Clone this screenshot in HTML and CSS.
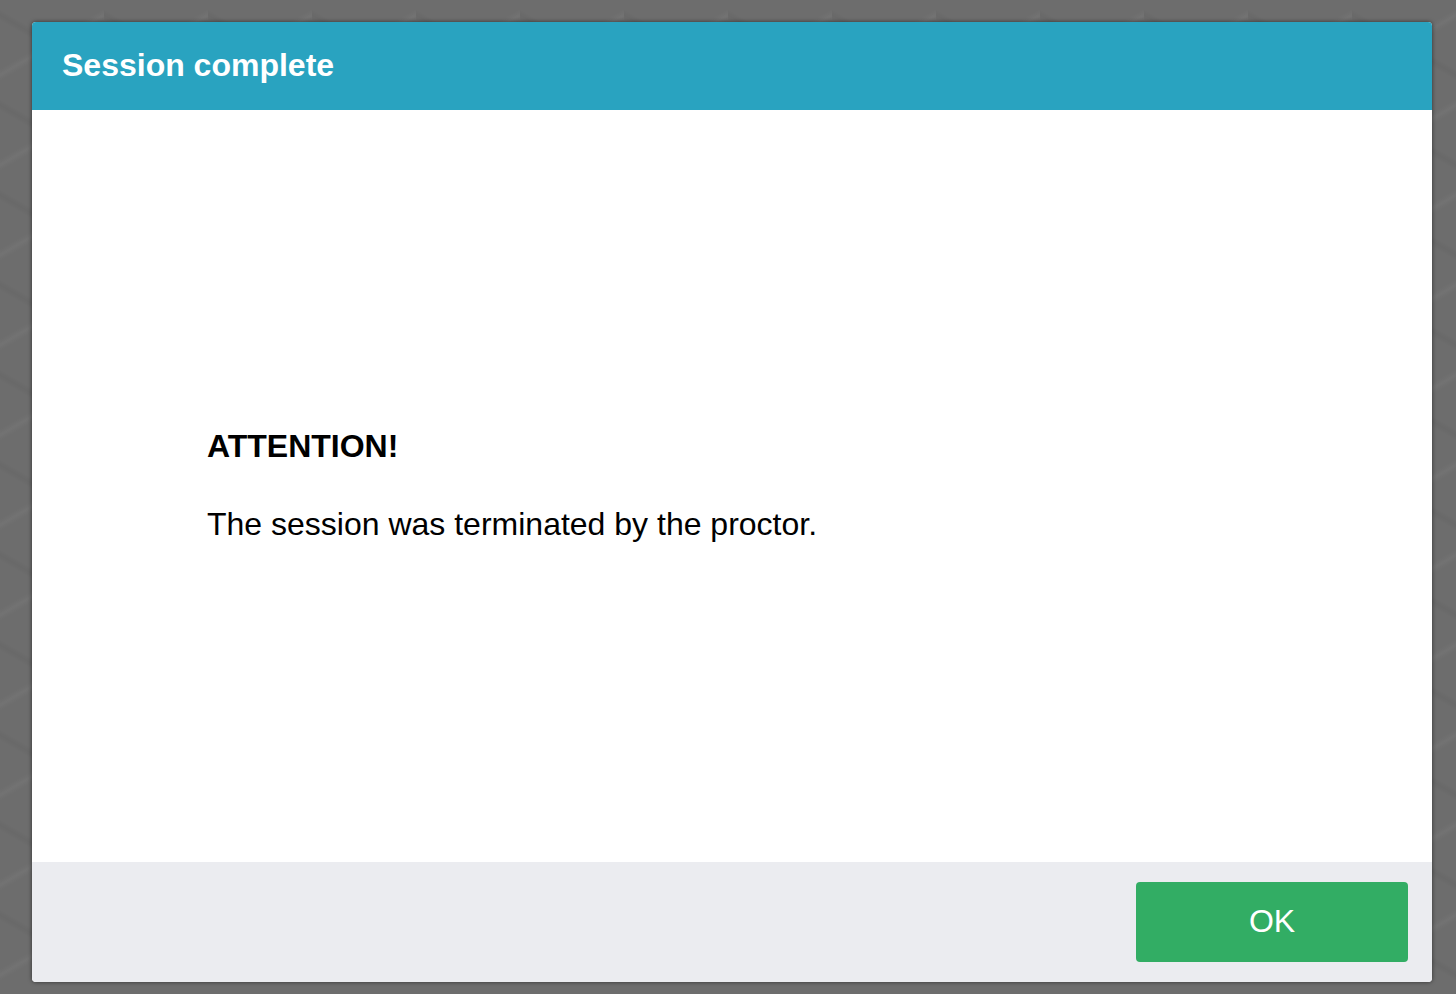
FILE: index.html
```html
<!DOCTYPE html>
<html lang="en">
<head>
  <meta charset="UTF-8">
  <title>Session complete</title>
  <meta name="viewport" content="width=device-width,initial-scale=1">
  <link rel="stylesheet" href="styles.css">
</head>
<body>
<div class="backdrop">
  <div class="dialog" role="dialog" aria-labelledby="dlg-title">
    <div class="dialog-head">
      <h1 id="dlg-title">Session complete</h1>
    </div>
    <div class="dialog-body">
      <div class="message">
        <p class="alert">ATTENTION!</p>
        <p>The session was terminated by the proctor.</p>
      </div>
    </div>
    <div class="dialog-foot">
      <button class="btn-ok" type="button">OK</button>
    </div>
  </div>
</div>
</body>
</html>
```

FILE: styles.css
```css
:root {
  --head: #29a3c0;
  --ok: #32ad64;
  --foot: #ebecf0;
  --bg: #6d6d6d;
  --sans: 'Liberation Sans', Arial, Helvetica, sans-serif;
}
html, body {
  margin: 0;
  padding: 0;
  height: 100%;
  font-family: var(--sans);
}
.backdrop {
  box-sizing: border-box;
  height: 100%;
  padding: 22px 24px 12px 32px;
  background-color: var(--bg);
  background-image:
    linear-gradient(150deg, transparent 46%, rgba(255,255,255,0.04) 50%, transparent 54%),
    linear-gradient(30deg, transparent 46%, rgba(0,0,0,0.04) 50%, transparent 54%);
  background-size: 104px 90px;
}
.dialog {
  display: flex;
  flex-direction: column;
  height: 960px;
  background: #fff;
  border-radius: 4px;
  overflow: hidden;
  box-shadow: 0 0 4px rgba(0,0,0,0.55);
}
.dialog-head {
  flex: 0 0 88px;
  display: flex;
  align-items: center;
  padding: 0 30px 2px;
  box-sizing: border-box;
  background: var(--head);
}
.dialog-head h1 {
  margin: 0;
  color: #fff;
  font-size: 32px;
  font-weight: 700;
}
.dialog-body {
  flex: 1;
  display: flex;
  align-items: center;
  padding: 0 175px 2px;
}
.message p {
  margin: 0;
  font-size: 32px;
  line-height: 1.2;
  color: #000;
}
.message .alert {
  font-weight: 700;
  margin-bottom: 40px;
}
.dialog-foot {
  flex: 0 0 120px;
  box-sizing: border-box;
  display: flex;
  justify-content: flex-end;
  align-items: center;
  padding: 0 24px;
  background: var(--foot);
}
.btn-ok {
  width: 272px;
  height: 80px;
  border: 0;
  border-radius: 4px;
  background: var(--ok);
  color: #fff;
  font-family: var(--sans);
  font-size: 32px;
  padding: 0 0 2px;
  cursor: pointer;
}
```
